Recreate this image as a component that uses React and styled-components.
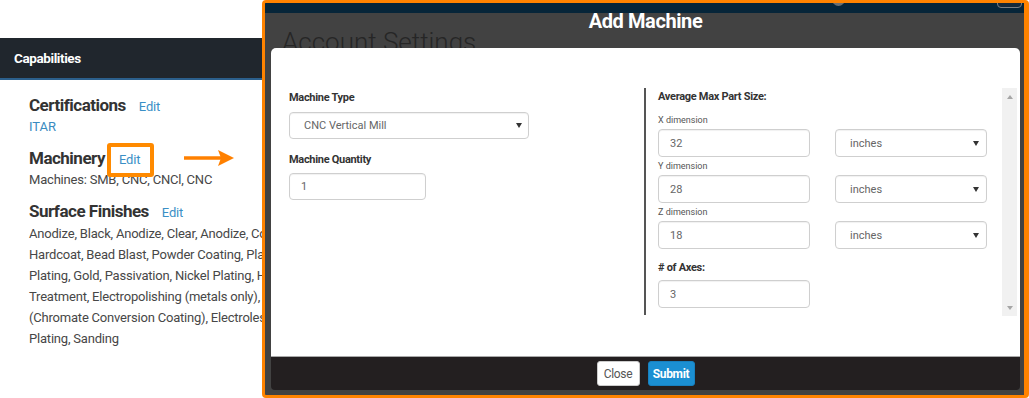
import React from "react";
import styled, { createGlobalStyle, css } from "styled-components";

const GlobalStyle = createGlobalStyle`
  html, body {
    margin: 0;
    padding: 0;
    background: #fff;
  }
  body {
    font-family: Roboto, "Liberation Sans", sans-serif;
  }
  * {
    box-sizing: border-box;
  }
`;

const Page = styled.div`
  display: flex;
  width: 1029px;
  height: 398px;
  overflow: hidden;
  background: #fff;
`;

/* ---------- left: profile capabilities ---------- */

const Profile = styled.div`
  width: 262px;
  flex: none;
  padding-top: 38px;
  overflow: hidden;
`;

const PanelHeader = styled.div`
  height: 42px;
  display: flex;
  align-items: center;
  padding: 0 14px;
  background: #20262d;
  border-bottom: 2px solid #2b5f8c;
  color: #fff;
  font-size: 13.5px;
  font-weight: 700;
  letter-spacing: -0.4px;
`;

const PanelBody = styled.div`
  padding-left: 29px;
`;

const Section = styled.div`
  margin-top: ${(p) => (p.$first ? 14 : 10)}px;
`;

const HeadingRow = styled.div`
  display: flex;
  align-items: baseline;
  height: 22px;
  margin-bottom: 1px;
`;

const Heading = styled.h3`
  margin: 0;
  font-size: 17px;
  line-height: 22px;
  font-weight: 700;
  letter-spacing: -0.5px;
  color: #333;
`;

const EditLink = styled.a`
  position: relative;
  margin-left: ${(p) => (p.$highlight ? 14 : 13)}px;
  font-size: 13px;
  line-height: 16px;
  letter-spacing: -0.2px;
  color: #3a8fc6;
  text-decoration: none;

  ${(p) =>
    p.$highlight &&
    css`
      &::before {
        content: "";
        position: absolute;
        top: -9px;
        bottom: -9px;
        left: -12px;
        right: -14px;
        border: 4px solid #ff8a00;
        border-radius: 3px;
      }
    `}
`;

const Arrow = styled.svg`
  align-self: center;
  margin-left: 44px;
  flex: none;
`;

const Tag = styled.div`
  font-size: 13px;
  line-height: 20px;
  color: #3a8bbf;
`;

const Para = styled.div`
  font-size: 13px;
  line-height: ${(p) => p.$lh || 20}px;
  letter-spacing: -0.2px;
  color: #474747;
  white-space: nowrap;
`;

/* ---------- right: modal screenshot ---------- */

const Shot = styled.div`
  flex: 1;
  position: relative;
  display: flex;
  flex-direction: column;
  border: 3px solid #ff8300;
  border-right-width: 5px;
  border-radius: 4px;
  background: #424242;
  overflow: hidden;
`;

const TopNav = styled.div`
  height: 10px;
  flex: none;
  display: flex;
  justify-content: flex-end;
  align-items: flex-start;
  padding-right: 2px;
  background: #062539;
  overflow: hidden;
`;

const NavDot = styled.span`
  width: 13px;
  height: 13px;
  margin-top: -10px;
  margin-right: 152px;
  border-radius: 50%;
  background: #6a6f73;
`;

const NavButton = styled.span`
  width: 25px;
  height: 20px;
  margin-top: -15px;
  border: 1.5px solid #7a7f84;
  border-radius: 4px;
  background: #15293a;
`;

const BackTitle = styled.h1`
  margin: 14px 0 0 17px;
  font-size: 26px;
  line-height: 30px;
  font-weight: 300;
  color: #262626;
  white-space: nowrap;
`;

const Modal = styled.div`
  position: absolute;
  top: 0;
  left: 6px;
  right: 4px;
  bottom: 0;
  display: flex;
  flex-direction: column;
`;

const ModalTitle = styled.div`
  height: 45px;
  flex: none;
  padding-top: 6px;
  text-align: center;
  font-size: 20px;
  line-height: 24px;
  font-weight: 700;
  letter-spacing: -0.4px;
  color: #fff;
`;

const Card = styled.div`
  flex: 1;
  display: grid;
  grid-template-columns: 355px 1fr 15px;
  align-items: start;
  padding: 40px 3px 0 18px;
  background: #fff;
  border-radius: 5px 5px 0 0;
`;

const LeftCol = styled.div`
  padding-top: 3px;
`;

const RightCol = styled.div`
  height: 227px;
  padding: 2px 0 0 12px;
  border-left: 2px solid #555;
`;

const Label = styled.div`
  margin-top: ${(p) => p.$mt || 0}px;
  font-size: 11px;
  line-height: 14px;
  font-weight: 700;
  letter-spacing: -0.3px;
  color: #333;
`;

const DimLabel = styled.div`
  margin-top: ${(p) => p.$mt}px;
  font-size: 9px;
  line-height: 11px;
  color: #555;
`;

const Field = styled.div`
  width: ${(p) => p.$w}px;
  height: ${(p) => p.$h || 28}px;
  margin-top: ${(p) => p.$mt || 0}px;
  display: flex;
  align-items: center;
  justify-content: space-between;
  padding: 0 ${(p) => (p.$select ? p.$cr || 7 : 8)}px 0 ${(p) => p.$pl || 11}px;
  border: 1px solid #cfcfcf;
  border-radius: 4px;
  box-shadow: inset 0 1px 1px rgba(0, 0, 0, 0.06);
  font-size: 11px;
  color: #666;
  flex: none;
`;

const Caret = styled.span`
  width: 0;
  height: 0;
  border-left: 3px solid transparent;
  border-right: 3px solid transparent;
  border-top: 5px solid #333;
`;

const FieldRow = styled.div`
  display: flex;
  gap: 25px;
  margin-top: 3px;
`;

const Scrollbar = styled.div`
  height: 228px;
  display: flex;
  flex-direction: column;
  justify-content: space-between;
  align-items: center;
  padding: 7px 0 6px;
  background: #f1f1f1;
`;

const ScrollArrow = styled.span`
  width: 0;
  height: 0;
  border-left: 3.5px solid transparent;
  border-right: 3.5px solid transparent;
  ${(p) =>
    p.$down
      ? css`
          border-top: 4px solid #a6a6a6;
        `
      : css`
          border-bottom: 4px solid #a6a6a6;
        `}
`;

const Footer = styled.div`
  height: 34px;
  flex: none;
  display: flex;
  justify-content: center;
  align-items: flex-start;
  gap: 8px;
  padding-top: 4px;
  margin-bottom: 5px;
  background: #231f20;
  border-top: 1px solid #a9a9a9;
  border-radius: 0 0 4px 4px;
`;

const Button = styled.button`
  height: 25px;
  width: ${(p) => p.$w}px;
  padding: 0;
  border-radius: 3px;
  font-family: inherit;
  font-size: 12px;
  letter-spacing: -0.3px;
  ${(p) =>
    p.$primary
      ? css`
          background: #1b8fd2;
          border: 1px solid #1780bf;
          color: #fff;
          font-weight: 700;
        `
      : css`
          background: #fff;
          border: 1px solid #ccc;
          color: #555;
        `}
`;

const finishes = [
  "Anodize, Black, Anodize, Clear, Anodize, Color, Anodize, Type III",
  "Hardcoat, Bead Blast, Powder Coating, Plating, Silver",
  "Plating, Gold, Passivation, Nickel Plating, Heat",
  "Treatment, Electropolishing (metals only), Chem Film",
  "(Chromate Conversion Coating), Electroless Nickel",
  "Plating, Sanding",
];

const dimensions = [
  { axis: "X", value: "32" },
  { axis: "Y", value: "28" },
  { axis: "Z", value: "18" },
];

const App = () => {
  return (
    <Page>
      <GlobalStyle />
      <Profile>
        <PanelHeader>Capabilities</PanelHeader>
        <PanelBody>
          <Section $first>
            <HeadingRow>
              <Heading>Certifications</Heading>
              <EditLink>Edit</EditLink>
            </HeadingRow>
            <Tag>ITAR</Tag>
          </Section>
          <Section>
            <HeadingRow>
              <Heading>Machinery</Heading>
              <EditLink $highlight>Edit</EditLink>
              <Arrow width="50" height="20" viewBox="0 0 50 20">
                <line x1="0" y1="10" x2="38" y2="10" stroke="#ff8000" strokeWidth="3.5" />
                <path d="M34 2 L50 10 L34 18 L37 10 Z" fill="#ff8000" />
              </Arrow>
            </HeadingRow>
            <Para>Machines: SMB, CNC, CNCl, CNC</Para>
          </Section>
          <Section>
            <HeadingRow>
              <Heading>Surface Finishes</Heading>
              <EditLink>Edit</EditLink>
            </HeadingRow>
            {finishes.map((line) => (
              <Para key={line} $lh={21}>
                {line}
              </Para>
            ))}
          </Section>
        </PanelBody>
      </Profile>

      <Shot>
        <TopNav>
          <NavDot />
          <NavButton />
        </TopNav>
        <BackTitle>Account Settings</BackTitle>

        <Modal>
          <ModalTitle>Add Machine</ModalTitle>
          <Card>
            <LeftCol>
              <Label>Machine Type</Label>
              <Field $w={240} $h={27} $mt={7} $pl={14} $select $cr={6}>
                CNC Vertical Mill
                <Caret />
              </Field>
              <Label $mt={14}>Machine Quantity</Label>
              <Field $w={137} $h={27} $mt={6}>
                1
              </Field>
            </LeftCol>

            <RightCol>
              <Label>Average Max Part Size:</Label>
              {dimensions.map((d, i) => (
                <React.Fragment key={d.axis}>
                  <DimLabel $mt={i === 0 ? 11 : 4}>{d.axis} dimension</DimLabel>
                  <FieldRow>
                    <Field $w={152}>{d.value}</Field>
                    <Field $w={152} $pl={14} $select>
                      inches
                      <Caret />
                    </Field>
                  </FieldRow>
                </React.Fragment>
              ))}
              <Label $mt={12}># of Axes:</Label>
              <Field $w={152} $mt={5}>
                3
              </Field>
            </RightCol>

            <Scrollbar>
              <ScrollArrow />
              <ScrollArrow $down />
            </Scrollbar>
          </Card>
          <Footer>
            <Button $w={43}>Close</Button>
            <Button $w={47} $primary>
              Submit
            </Button>
          </Footer>
        </Modal>
      </Shot>
    </Page>
  );
};

export default App;
